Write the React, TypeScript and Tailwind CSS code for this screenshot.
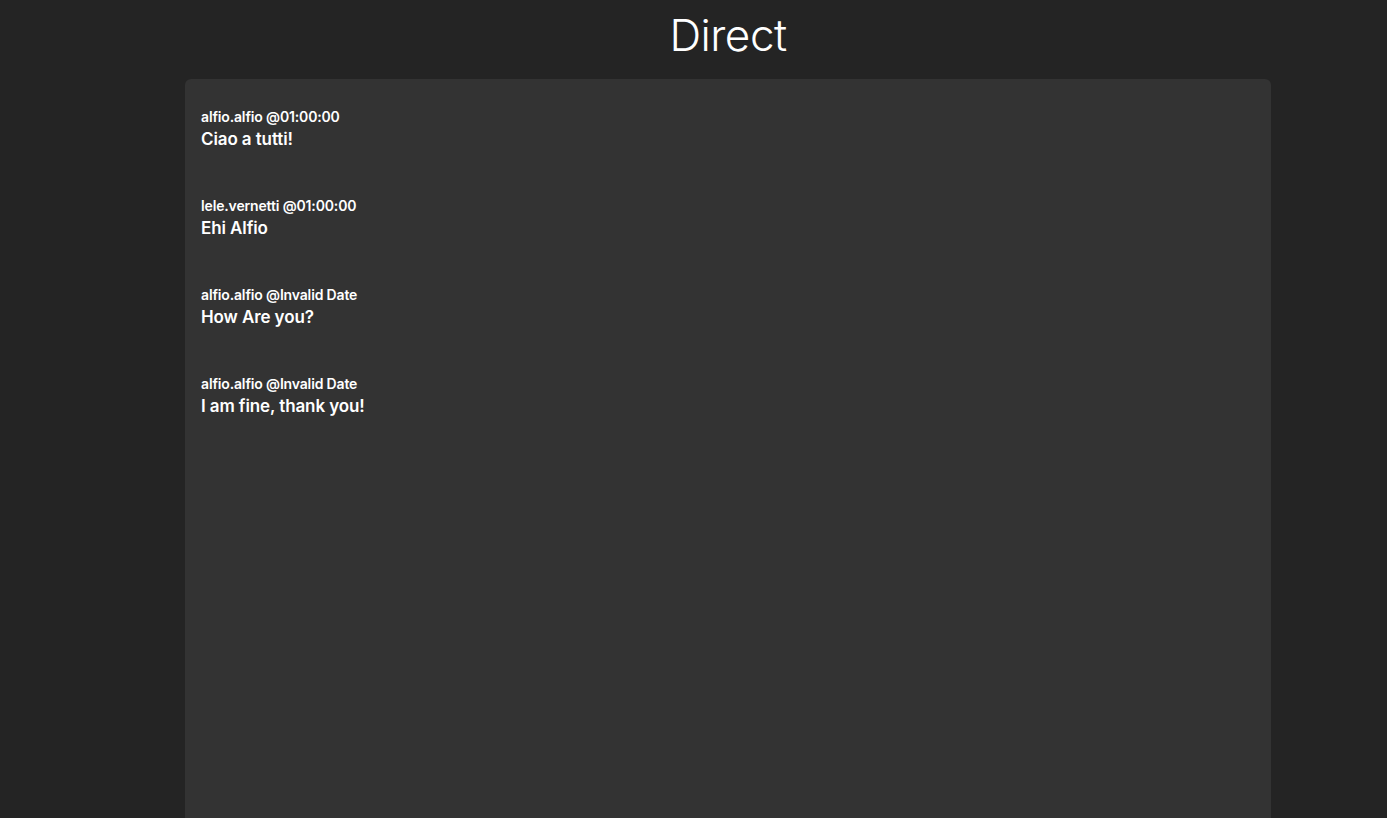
const messages = [
  { user: 'alfio.alfio', time: '01:00:00', text: 'Ciao a tutti!' },
  { user: 'lele.vernetti', time: '01:00:00', text: 'Ehi Alfio' },
  { user: 'alfio.alfio', time: 'Invalid Date', text: 'How Are you?' },
  { user: 'alfio.alfio', time: 'Invalid Date', text: 'I am fine, thank you!' },
];

export default function App() {
  return (
    <div className="flex h-[818px] overflow-hidden bg-[#242424] font-['Inter',sans-serif] text-white">
      <div className="w-[69px] shrink-0" />
      <div className="flex flex-1 flex-col items-center">
        <h1 className="pt-[9px] text-[44px] font-light leading-[52px] tracking-[-0.5px]">Direct</h1>
        <div className="mt-[18px] min-h-[760px] w-[1086px] shrink-0 rounded-md bg-[#333333] px-4 pt-[28px]">
          {messages.map((m, i) => (
            <div key={i} className="mb-[45px]">
              <div className="text-[14px] font-semibold leading-[20px] tracking-[-0.15px]">
                {m.user} @{m.time}
              </div>
              <div className="text-[17px] font-semibold leading-[24px] tracking-[-0.1px]">{m.text}</div>
            </div>
          ))}
        </div>
      </div>
    </div>
  );
}
